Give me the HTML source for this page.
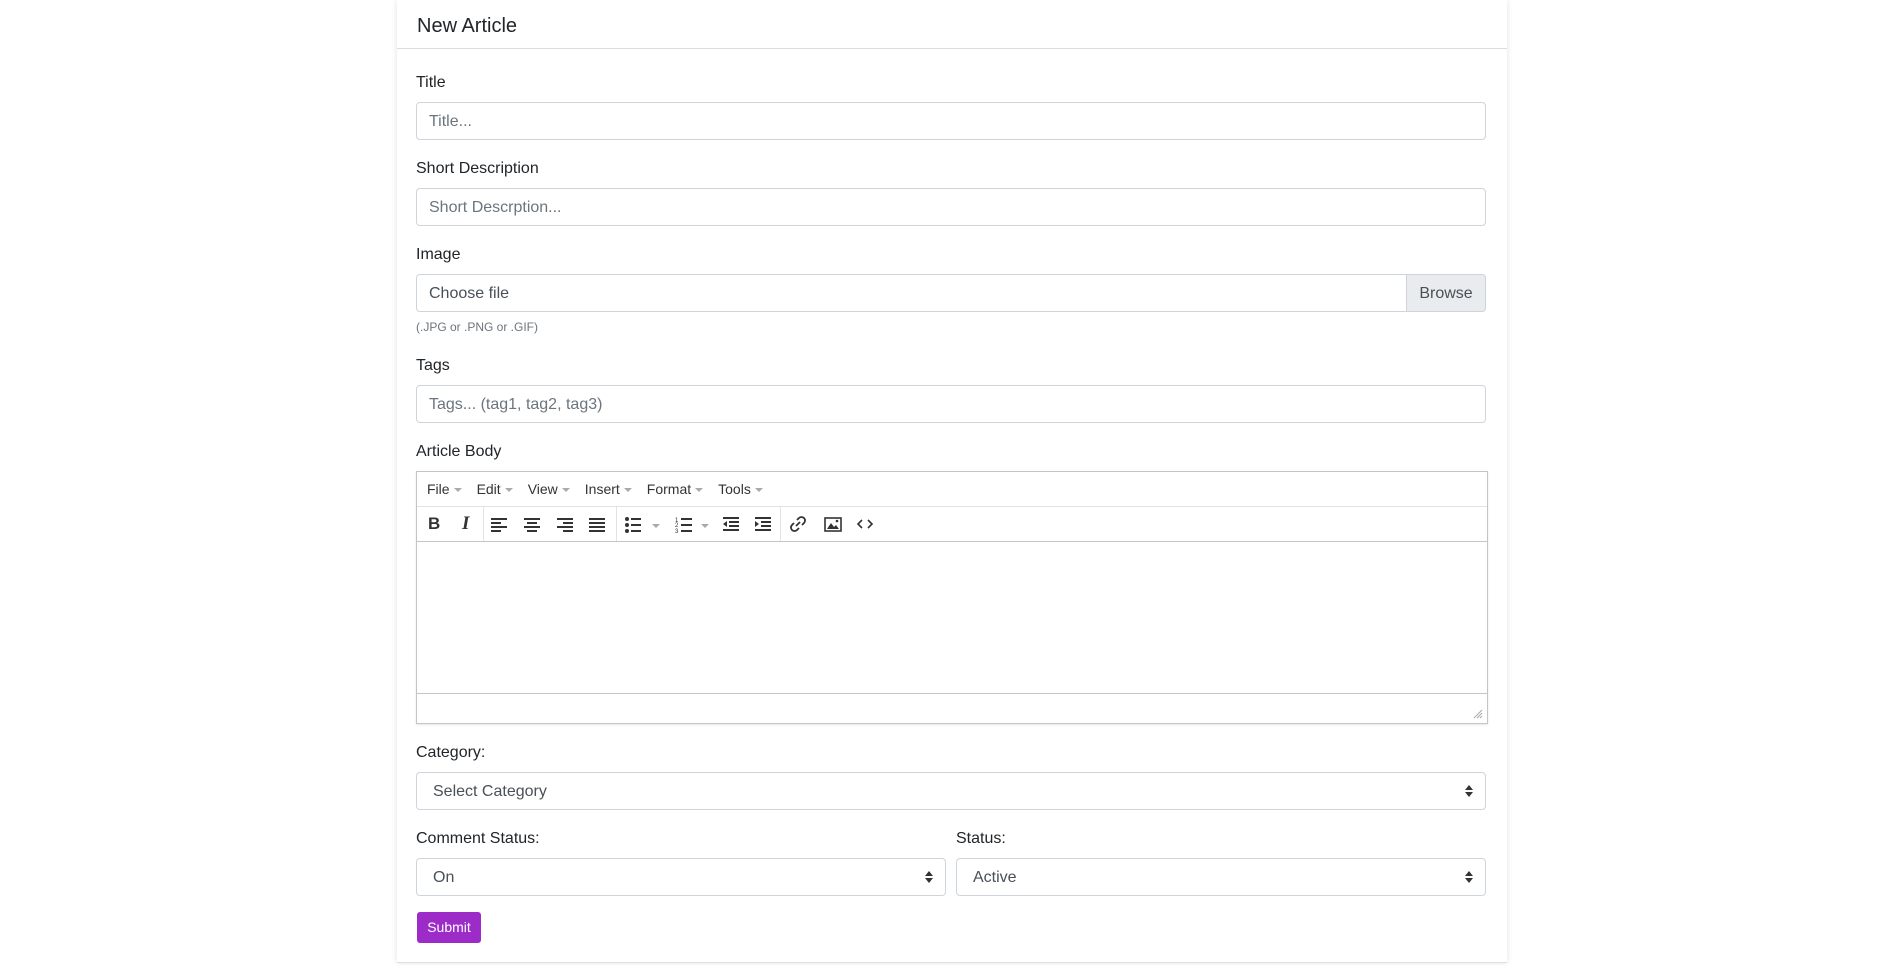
<!DOCTYPE html>
<html><head><meta charset="utf-8"><style>
*{box-sizing:border-box;margin:0;padding:0}
body{width:1904px;height:965px;background:#fff;font-family:"Liberation Sans",sans-serif;color:#212529;position:relative;overflow:hidden}
.a{position:absolute}
.card{left:397px;top:0;width:1110px;height:963px;background:#fff;box-shadow:0 0 6px rgba(0,0,0,.12);border-bottom:1px solid #e0e0e0}
.lbl{font-size:16px;color:#212529}
.inp{border:1px solid #ced4da;border-radius:4px;height:38px;font-size:16px;color:#6c757d;padding-left:12px;line-height:37px;background:#fff}
.sel{border:1px solid #ced4da;border-radius:4px;height:38px;font-size:16px;color:#495057;padding-left:16px;line-height:37px}
.arr{position:absolute;right:12px;top:12px;width:8px;height:12px}
.menu span{font-size:14px;color:#333;margin-right:15px}
.menu i{display:inline-block;border:4px solid transparent;border-top:4px solid #aaa;border-bottom:0;margin-left:4px;vertical-align:middle}
svg.ic{position:absolute;top:515px}
</style></head><body>
<div class="a card"></div>
<div class="a" style="left:397px;top:48px;width:1110px;height:1px;background:#dcdcdc"></div>
<div class="a" style="left:417px;top:15px;font-size:20px;color:#212529">New Article</div>

<div class="a lbl" style="left:416px;top:74px">Title</div>
<div class="a inp" style="left:416px;top:102px;width:1070px">Title...</div>
<div class="a lbl" style="left:416px;top:160px">Short Description</div>
<div class="a inp" style="left:416px;top:188px;width:1070px">Short Descrption...</div>
<div class="a lbl" style="left:416px;top:246px">Image</div>
<div class="a inp" style="left:416px;top:274px;width:1070px;color:#495057">Choose file</div>
<div class="a" style="left:1406px;top:274px;width:80px;height:38px;background:#e9ecef;border:1px solid #ced4da;border-radius:0 4px 4px 0;font-size:16px;color:#495057;text-align:center;line-height:37px">Browse</div>
<div class="a" style="left:416px;top:320px;font-size:12px;color:#6c757d">(.JPG or .PNG or .GIF)</div>
<div class="a lbl" style="left:416px;top:357px">Tags</div>
<div class="a inp" style="left:416px;top:385px;width:1070px">Tags... (tag1, tag2, tag3)</div>
<div class="a lbl" style="left:416px;top:443px">Article Body</div>

<div class="a" style="left:416px;top:471px;width:1072px;height:253px;border:1px solid #c5c5c5;box-shadow:0 1px 2px rgba(0,0,0,.1)"></div>
<div class="a" style="left:417px;top:506px;width:1070px;height:1px;background:#e2e2e2"></div>
<div class="a" style="left:417px;top:541px;width:1070px;height:1px;background:#c5c5c5"></div>
<div class="a" style="left:417px;top:693px;width:1070px;height:1px;background:#c5c5c5"></div>
<div class="a menu" style="left:427px;top:481px;white-space:nowrap"><span>File<i></i></span><span>Edit<i></i></span><span>View<i></i></span><span>Insert<i></i></span><span>Format<i></i></span><span>Tools<i></i></span></div>
<div class="a" style="left:483px;top:507px;width:1px;height:34px;background:#e2e2e2"></div>
<div class="a" style="left:616px;top:507px;width:1px;height:34px;background:#e2e2e2"></div>
<div class="a" style="left:780px;top:507px;width:1px;height:34px;background:#e2e2e2"></div>
<div class="a" style="left:428px;top:514px;font-size:17px;font-weight:bold;color:#333">B</div>
<div class="a" style="left:462px;top:513px;font-size:19px;font-style:italic;font-weight:bold;font-family:'Liberation Serif',serif;color:#333">I</div>
<svg class="ic" style="left:490px" width="18" height="18" fill="#333"><rect x="1" y="3" width="16" height="2"/><rect x="1" y="7" width="10" height="2"/><rect x="1" y="11" width="16" height="2"/><rect x="1" y="15" width="10" height="2"/></svg>
<svg class="ic" style="left:523px" width="18" height="18" fill="#333"><rect x="1" y="3" width="16" height="2"/><rect x="4" y="7" width="10" height="2"/><rect x="1" y="11" width="16" height="2"/><rect x="4" y="15" width="10" height="2"/></svg>
<svg class="ic" style="left:556px" width="18" height="18" fill="#333"><rect x="1" y="3" width="16" height="2"/><rect x="7" y="7" width="10" height="2"/><rect x="1" y="11" width="16" height="2"/><rect x="7" y="15" width="10" height="2"/></svg>
<svg class="ic" style="left:588px" width="18" height="18" fill="#333"><rect x="1" y="3" width="16" height="2"/><rect x="1" y="7" width="16" height="2"/><rect x="1" y="11" width="16" height="2"/><rect x="1" y="15" width="16" height="2"/></svg>
<svg class="ic" style="left:624px" width="18" height="18" fill="#333"><circle cx="3" cy="4" r="2"/><circle cx="3" cy="10" r="2"/><circle cx="3" cy="16" r="2"/><rect x="7" y="3" width="10" height="2"/><rect x="7" y="9" width="10" height="2"/><rect x="7" y="15" width="10" height="2"/></svg>
<svg class="ic" style="left:651px" width="10" height="18" fill="#aaa"><path d="M1 9h8l-4 4z"/></svg>
<svg class="ic" style="left:675px" width="18" height="18" fill="#333"><text x="0" y="7" font-size="6">1</text><text x="0" y="12" font-size="6">2</text><text x="0" y="18" font-size="6">3</text><rect x="6" y="3" width="11" height="2"/><rect x="6" y="9" width="11" height="2"/><rect x="6" y="15" width="11" height="2"/></svg>
<svg class="ic" style="left:700px" width="10" height="18" fill="#aaa"><path d="M1 9h8l-4 4z"/></svg>
<svg class="ic" style="left:722px" width="18" height="18" fill="#333"><rect x="1" y="2" width="16" height="2"/><rect x="7" y="6" width="10" height="2"/><rect x="7" y="10" width="10" height="2"/><rect x="1" y="14" width="16" height="2"/><path d="M5 6v6l-4-3z"/></svg>
<svg class="ic" style="left:754px" width="18" height="18" fill="#333"><rect x="1" y="2" width="16" height="2"/><rect x="7" y="6" width="10" height="2"/><rect x="7" y="10" width="10" height="2"/><rect x="1" y="14" width="16" height="2"/><path d="M1 6v6l4-3z"/></svg>
<svg class="ic" style="left:789px" width="18" height="18" fill="none" stroke="#333" stroke-width="1.8"><path d="M8 5l2-2a3 3 0 0 1 5 5l-2 2M10 13l-2 2a3 3 0 0 1-5-5l2-2M7 11l4-4"/></svg>
<svg class="ic" style="left:824px" width="18" height="18"><rect x="1" y="3" width="16" height="13" fill="none" stroke="#333" stroke-width="1.6"/><path d="M3 14l4-6 3 4 2-2 3 4z" fill="#333"/><circle cx="13" cy="6" r="1.3" fill="#333"/></svg>
<svg class="ic" style="left:856px" width="18" height="18" fill="none" stroke="#333" stroke-width="1.6"><path d="M6 5l-4 4 4 4M12 5l4 4-4 4"/></svg>
<svg class="a" style="left:1473px;top:709px" width="10" height="10" stroke="#aaa" stroke-width="1"><path d="M9 1L1 9M9 4L4 9M9 7L7 9"/></svg>

<div class="a lbl" style="left:416px;top:744px">Category:</div>
<div class="a sel" style="left:416px;top:772px;width:1070px">Select Category<svg class="arr" viewBox="0 0 8 12" fill="#333"><path d="M4 0l4 5H0zM4 12l4-5H0z"/></svg></div>
<div class="a lbl" style="left:416px;top:830px">Comment Status:</div>
<div class="a sel" style="left:416px;top:858px;width:530px">On<svg class="arr" viewBox="0 0 8 12" fill="#333"><path d="M4 0l4 5H0zM4 12l4-5H0z"/></svg></div>
<div class="a lbl" style="left:956px;top:830px">Status:</div>
<div class="a sel" style="left:956px;top:858px;width:530px">Active<svg class="arr" viewBox="0 0 8 12" fill="#333"><path d="M4 0l4 5H0zM4 12l4-5H0z"/></svg></div>
<div class="a" style="left:417px;top:912px;width:64px;height:31px;background:#9d2bc8;border-radius:3px;color:#fff;font-size:14px;text-align:center;line-height:31px">Submit</div>
</body></html>
